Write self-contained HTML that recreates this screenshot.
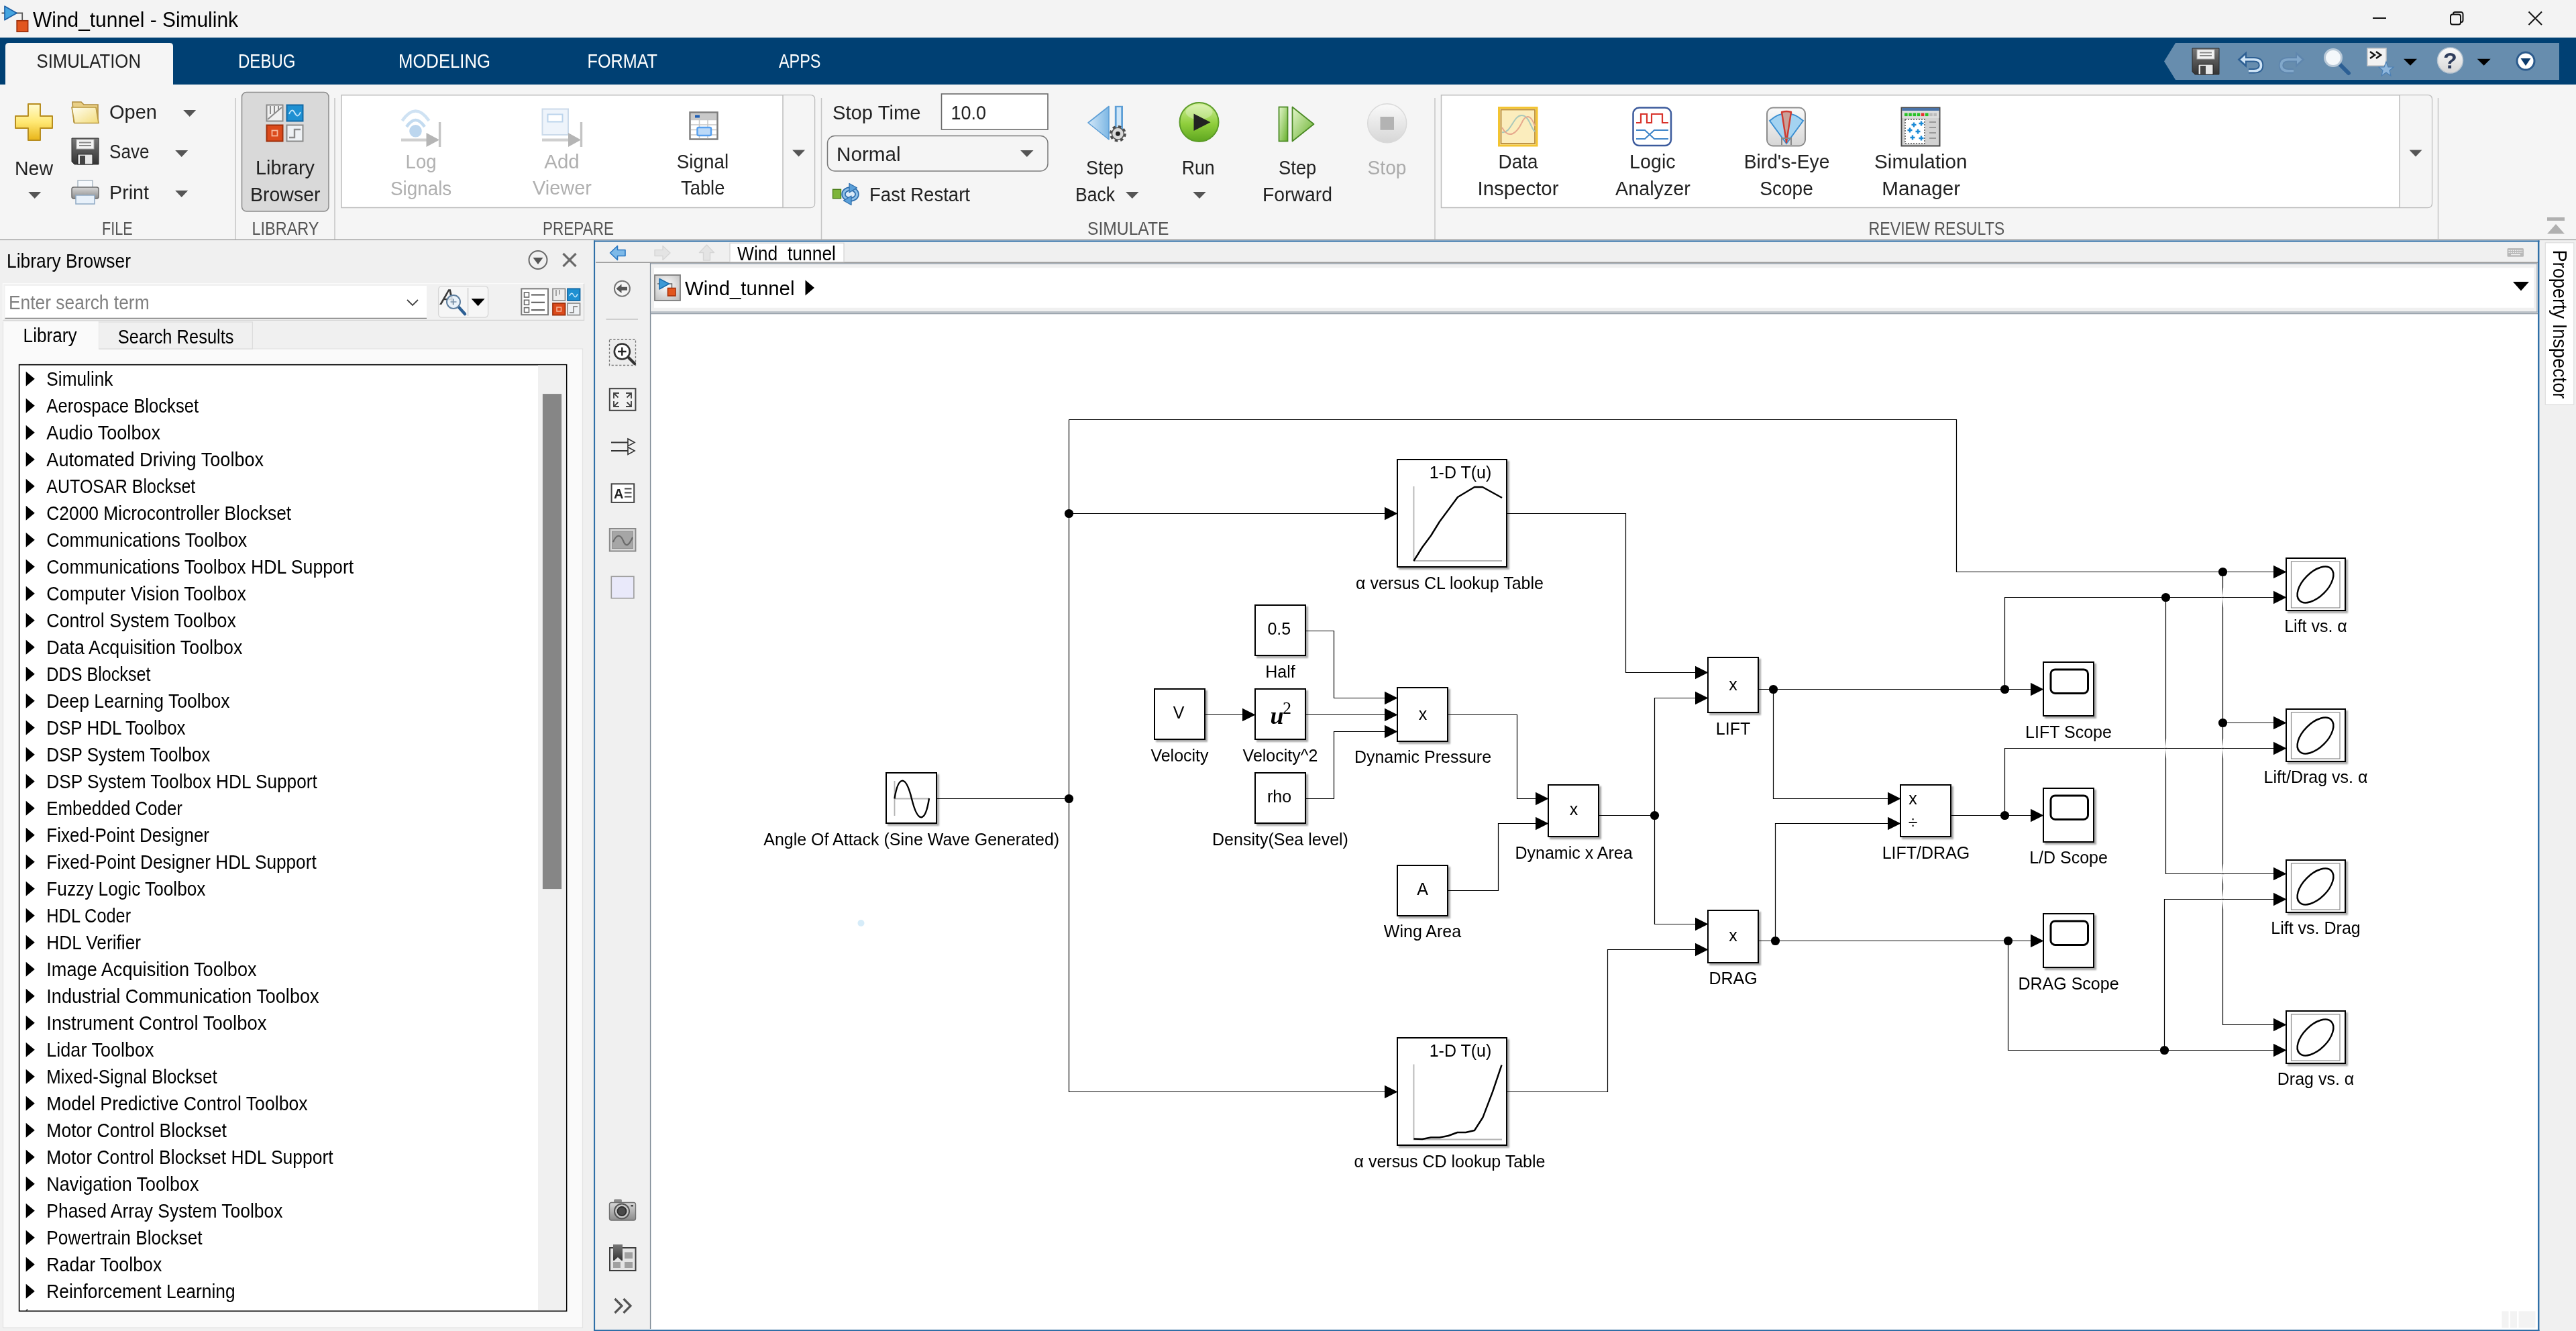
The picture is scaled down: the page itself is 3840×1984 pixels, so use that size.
<!DOCTYPE html>
<html lang="en"><head><meta charset="utf-8"><title>Wind_tunnel - Simulink</title>
<style>
html,body{margin:0;padding:0;background:#f0f0f0}
body{width:3840px;height:1984px}
svg{display:block;font-family:"Liberation Sans",sans-serif;will-change:transform}
text{white-space:pre}
</style></head><body>
<svg width="3840" height="1984" viewBox="0 0 3840 1984">
<rect x="0" y="0" width="3840" height="56" fill="#f3f3f3"/>
<rect x="0" y="56" width="3840" height="70" fill="#004073"/>
<rect x="0" y="126" width="3840" height="231" fill="#f5f5f5"/>
<defs>
<linearGradient id="gY" x1="0" y1="0" x2="0" y2="1"><stop offset="0" stop-color="#fffbd0"/><stop offset="0.5" stop-color="#ffe873"/><stop offset="1" stop-color="#e8b418"/></linearGradient>
<linearGradient id="gF" x1="0" y1="0" x2="1" y2="1"><stop offset="0" stop-color="#fffef2"/><stop offset="1" stop-color="#f3dc7a"/></linearGradient>
<linearGradient id="gG" x1="0" y1="0" x2="0" y2="1"><stop offset="0" stop-color="#d2f09a"/><stop offset="0.55" stop-color="#8fce3c"/><stop offset="1" stop-color="#5ea61f"/></linearGradient>
<linearGradient id="gG2" x1="0" y1="0" x2="1" y2="1"><stop offset="0" stop-color="#e4f6cc"/><stop offset="1" stop-color="#67b02c"/></linearGradient>
<linearGradient id="gB" x1="0" y1="0" x2="1" y2="0"><stop offset="0" stop-color="#d3e8f8"/><stop offset="1" stop-color="#7db7e4"/></linearGradient>
<linearGradient id="gS" x1="0" y1="0" x2="0" y2="1"><stop offset="0" stop-color="#fafafa"/><stop offset="1" stop-color="#d6d6d6"/></linearGradient>
<linearGradient id="gD" x1="0" y1="0" x2="0" y2="1"><stop offset="0" stop-color="#777"/><stop offset="1" stop-color="#333"/></linearGradient>
<linearGradient id="gP" x1="0" y1="0" x2="0" y2="1"><stop offset="0" stop-color="#d8d8d8"/><stop offset="1" stop-color="#8a8a8a"/></linearGradient>
</defs>
<path d="M2.5,19.5 H8 M24,19.5 H33.2 V31" fill="none" stroke="#5a5a5a" stroke-width="1.8"/>
<polygon points="7,9.2 7,29.8 25,19.5" fill="#45a5e0" stroke="#1c5fa5" stroke-width="1.7" stroke-linejoin="round"/>
<rect x="25.2" y="30.8" width="16.4" height="16.4" fill="#e2561e" stroke="#9c300c" stroke-width="1.7"/>
<text x="49" y="40" font-size="30.8" textLength="306" lengthAdjust="spacingAndGlyphs" fill="#000">Wind_tunnel - Simulink</text>
<line x1="3537" y1="27" x2="3557" y2="27" stroke="#111" stroke-width="2"/>
<rect x="3653" y="21.5" width="15" height="15" fill="none" stroke="#111" stroke-width="2" rx="3"/>
<path d="M3657,21 V20.5 Q3657,18 3660,18 H3668 Q3671.5,18 3671.5,21.5 V30 Q3671.5,33 3669,33" fill="none" stroke="#111" stroke-width="2"/>
<path d="M3769.5,17.5 L3789,37 M3789,17.5 L3769.5,37" fill="none" stroke="#111" stroke-width="2"/>
<path d="M8,126 V69 Q8,64 13,64 H253 Q258,64 258,69 V126 Z" fill="#f5f5f5"/>
<text x="54.5" y="100.5" font-size="28.6" textLength="155.5" lengthAdjust="spacingAndGlyphs" fill="#222">SIMULATION</text>
<text x="355" y="100.5" font-size="28.6" textLength="85.5" lengthAdjust="spacingAndGlyphs" fill="#fff">DEBUG</text>
<text x="594" y="100.5" font-size="28.6" textLength="137" lengthAdjust="spacingAndGlyphs" fill="#fff">MODELING</text>
<text x="875.5" y="100.5" font-size="28.6" textLength="104.5" lengthAdjust="spacingAndGlyphs" fill="#fff">FORMAT</text>
<text x="1161" y="100.5" font-size="28.6" textLength="62.5" lengthAdjust="spacingAndGlyphs" fill="#fff">APPS</text>
<polygon points="3226,91.5 3243,64 3815,64 3815,119 3243,119" fill="#678dae"/>
<path d="M3268,72 H3308 V111 H3272 L3268,107 Z" fill="url(#gD)" stroke="#2d2d2d" stroke-width="1"/>
<rect x="3275" y="74" width="26" height="14" fill="#f3f3f3" stroke="#aaa" stroke-width="1"/>
<line x1="3279" y1="78.5" x2="3297" y2="78.5" stroke="#888" stroke-width="2"/>
<line x1="3279" y1="83" x2="3297" y2="83" stroke="#888" stroke-width="2"/>
<rect x="3277" y="96" width="22" height="15" fill="#e8e8e8" stroke="#222" stroke-width="1"/>
<rect x="3280" y="98" width="8" height="13" fill="#444"/>
<path d="M3346,88.7 H3360 Q3370.5,88.7 3370.5,97.2 Q3370.5,105.7 3360,105.7 H3352" fill="none" stroke="#2d5f93" stroke-width="7.5"/>
<polygon points="3335.5,88.7 3349,76.5 3349,101" fill="#2d5f93"/>
<path d="M3346,88.7 H3360 Q3370.5,88.7 3370.5,97.2 Q3370.5,105.7 3360,105.7 H3352" fill="none" stroke="#cfe4f6" stroke-width="3.6"/>
<polygon points="3339.5,88.7 3347,82 3347,95.4" fill="#cfe4f6"/>
<path d="M3425,88.7 H3411 Q3400.5,88.7 3400.5,97.2 Q3400.5,105.7 3411,105.7 H3419" fill="none" stroke="#5f86ad" stroke-width="7.5"/>
<polygon points="3435.5,88.7 3422,76.5 3422,101" fill="#5f86ad"/>
<path d="M3425,88.7 H3411 Q3400.5,88.7 3400.5,97.2 Q3400.5,105.7 3411,105.7 H3419" fill="none" stroke="#82a8cb" stroke-width="3.6"/>
<polygon points="3431.5,88.7 3424,82 3424,95.4" fill="#82a8cb"/>
<line x1="3488" y1="96" x2="3501" y2="109" stroke="#2c5f94" stroke-width="6" stroke-linecap="round"/>
<circle cx="3478" cy="86" r="12.5" fill="#f4f8fb" stroke="#b9c9d8" stroke-width="3"/>
<rect x="3529" y="72" width="28" height="26" fill="#f2f2f2" stroke="#c8c8c8" stroke-width="1.5"/>
<path d="M3533,77 L3540,82 L3533,87 M3542,77 L3549,82 L3542,87" fill="none" stroke="#111" stroke-width="2.6"/>
<polygon points="3557,92 3560,100 3568,100 3562,105 3564,113 3557,108 3550,113 3552,105 3546,100 3554,100" fill="#8fb7dd" stroke="#4b7fb3" stroke-width="1.2"/>
<polygon points="3583.0,87.7 3603.0,87.7 3593,97.7" fill="#000"/>
<circle cx="3652.5" cy="90" r="19" fill="url(#gS)" stroke="#b5c3d0" stroke-width="1.5"/>
<text x="3652.5" y="102" font-size="34" text-anchor="middle" fill="#2f3d5c" font-weight="bold">?</text>
<polygon points="3692.7,87.7 3712.7,87.7 3702.7,97.7" fill="#000"/>
<circle cx="3765" cy="91" r="13" fill="#fff" stroke="#2b5a8c" stroke-width="3"/>
<polygon points="3757.5,87.0 3772.5,87.0 3765,98.0" fill="#0b3a6b"/>
<line x1="0" y1="357.5" x2="3840" y2="357.5" stroke="#9a9a9a" stroke-width="1.5"/>
<path d="M42,155 H60 V173 H78 V191 H60 V209 H42 V191 H23 V173 H42 Z" fill="url(#gY)" stroke="#b78d1f" stroke-width="2" stroke-linejoin="round"/>
<text x="22" y="260.5" font-size="30" textLength="57" lengthAdjust="spacingAndGlyphs" fill="#222">New</text>
<polygon points="42.2,286.0 61.2,286.0 51.7,296.0" fill="#555"/>
<path d="M108,152 H121 L125,156 H146 V182 H110 Z" fill="#e9cf86" stroke="#b08d3c" stroke-width="1.6"/>
<path d="M107,160 H143 L147,183.5 H111 Z" fill="url(#gF)" stroke="#b9983f" stroke-width="1.6"/>
<text x="163" y="177" font-size="30" textLength="71" lengthAdjust="spacingAndGlyphs" fill="#222">Open</text>
<polygon points="273.2,164.0 292.2,164.0 282.7,174.0" fill="#555"/>
<path d="M107,206 H147 V245 H111 L107,241 Z" fill="url(#gD)" stroke="#2d2d2d" stroke-width="1"/>
<rect x="114" y="208" width="26" height="14" fill="#f3f3f3" stroke="#aaa" stroke-width="1"/>
<line x1="118" y1="212.5" x2="136" y2="212.5" stroke="#888" stroke-width="2"/>
<line x1="118" y1="217" x2="136" y2="217" stroke="#888" stroke-width="2"/>
<rect x="116" y="230" width="22" height="15" fill="#e8e8e8" stroke="#222" stroke-width="1"/>
<rect x="119" y="232" width="8" height="13" fill="#444"/>
<text x="163" y="236" font-size="30" textLength="59.5" lengthAdjust="spacingAndGlyphs" fill="#222">Save</text>
<polygon points="261.2,224.0 280.2,224.0 270.7,234.0" fill="#555"/>
<rect x="116" y="269" width="22" height="12" fill="#f6f9fc" stroke="#a9b6c2" stroke-width="1.5"/>
<rect x="107" y="279" width="40" height="17" fill="url(#gP)" stroke="#6d6d6d" stroke-width="1.5" rx="3"/>
<rect x="113" y="291" width="28" height="13" fill="#e8f1fa" stroke="#8fa9c4" stroke-width="1.5"/>
<text x="163" y="297" font-size="30" textLength="59" lengthAdjust="spacingAndGlyphs" fill="#222">Print</text>
<polygon points="261.2,284.0 280.2,284.0 270.7,294.0" fill="#555"/>
<text x="152" y="349.5" font-size="27.6" textLength="45.7" lengthAdjust="spacingAndGlyphs" fill="#555">FILE</text>
<line x1="351" y1="146" x2="351" y2="357" stroke="#c4c4c4" stroke-width="1.5"/>
<rect x="360.5" y="137.5" width="129.5" height="177.5" fill="#d9d9d9" stroke="#8c8c8c" stroke-width="1.5" rx="7"/>
<rect x="397.5" y="156.5" width="24" height="24" fill="#f0f0f0" stroke="#8a8a8a" stroke-width="2"/>
<path d="M403,158 V170 M409,158 V168 M415,158 V165 M399,178 L420,160" fill="none" stroke="#8a8a8a" stroke-width="2"/>
<rect x="427.5" y="156.5" width="24" height="24" fill="#1e90d2" stroke="#136aa6" stroke-width="2"/>
<path d="M431,170 Q435,160 439.5,168.5 T448,167" fill="none" stroke="#bfe4fa" stroke-width="2"/>
<rect x="397.5" y="186.5" width="24" height="24" fill="#db4a1b" stroke="#9e300c" stroke-width="2"/>
<rect x="405.5" y="194.5" width="8" height="8" fill="none" stroke="#f7b79a" stroke-width="1.8"/>
<rect x="427.5" y="186.5" width="24" height="24" fill="#eef1f4" stroke="#8a8a8a" stroke-width="2"/>
<path d="M431,205 H439 V193 H448" fill="none" stroke="#8a8a8a" stroke-width="2.4"/>
<text x="381" y="260" font-size="30" textLength="88" lengthAdjust="spacingAndGlyphs" fill="#222">Library</text>
<text x="373" y="300" font-size="30" textLength="104.5" lengthAdjust="spacingAndGlyphs" fill="#222">Browser</text>
<text x="375.5" y="349.5" font-size="27.6" textLength="100" lengthAdjust="spacingAndGlyphs" fill="#555">LIBRARY</text>
<line x1="499" y1="146" x2="499" y2="357" stroke="#c4c4c4" stroke-width="1.5"/>
<path d="M509,141.75 H1208 Q1214.5,141.75 1214.5,148 V303 Q1214.5,309.5 1208,309.5 H509 Z" fill="#fff" stroke="#bdbdbd" stroke-width="1.5"/>
<path d="M1167,142.5 H1208 Q1213.7,142.5 1213.7,148 V303 Q1213.7,308.7 1208,308.7 H1167 Z" fill="#f5f5f5"/>
<line x1="1167" y1="142" x2="1167" y2="309" stroke="#bdbdbd" stroke-width="1.5"/>
<polygon points="1181.1,223.6 1200.1,223.6 1190.6,233.6" fill="#555"/>
<path d="M599.5,180 Q619.5,151 639.5,180" fill="none" stroke="#cfe2f3" stroke-width="4.5"/>
<path d="M606,189 Q619.5,169 633,189" fill="none" stroke="#c3dbf0" stroke-width="4.5"/>
<circle cx="619.5" cy="195.3" r="9.3" fill="#bcd6ee"/>
<line x1="598" y1="208.6" x2="640" y2="208.6" stroke="#cfcfcf" stroke-width="4.2"/>
<polygon points="635.5,198 635.5,219 655,208.6" fill="#b5b5b5"/>
<line x1="655.6" y1="182" x2="655.6" y2="219" stroke="#c4c4c4" stroke-width="3.4"/>
<text x="604.6" y="251" font-size="30" textLength="46" lengthAdjust="spacingAndGlyphs" fill="#b0b0b0">Log</text>
<text x="581.9" y="291" font-size="30" textLength="91.4" lengthAdjust="spacingAndGlyphs" fill="#b0b0b0">Signals</text>
<rect x="808.5" y="162.5" width="38.5" height="38.5" fill="#eef4fb" stroke="#cbdaea" stroke-width="2"/>
<rect x="816.5" y="170.5" width="22" height="11" fill="#fff" stroke="#bcd4ec" stroke-width="2"/>
<line x1="808" y1="208.6" x2="850" y2="208.6" stroke="#cfcfcf" stroke-width="4.2"/>
<polygon points="847,198 847,219 866,208.6" fill="#b5b5b5"/>
<line x1="866.5" y1="182" x2="866.5" y2="219" stroke="#c4c4c4" stroke-width="3.4"/>
<text x="811.25" y="250.5" font-size="30" textLength="52.5" lengthAdjust="spacingAndGlyphs" fill="#b0b0b0">Add</text>
<text x="794.0" y="290" font-size="30" textLength="88" lengthAdjust="spacingAndGlyphs" fill="#b0b0b0">Viewer</text>
<rect x="1028.5" y="167.5" width="41" height="40" fill="#fff" stroke="#7d7d7d" stroke-width="2.5"/>
<rect x="1030" y="169" width="38" height="9" fill="#c9c9c9"/>
<rect x="1036" y="171.5" width="7" height="4" fill="#1f5fb5"/>
<path d="M1030,178.5 H1068 M1030,186 H1068 M1030,193.5 H1068 M1030,201 H1068 M1042.5,178 V206 M1055,178 V206" fill="none" stroke="#c6c6c6" stroke-width="1.5"/>
<rect x="1039.5" y="190" width="20.5" height="12" fill="#bcd9f7" stroke="#58a0ee" stroke-width="2.5" rx="2"/>
<text x="1008.75" y="250.5" font-size="30" textLength="77.5" lengthAdjust="spacingAndGlyphs" fill="#222">Signal</text>
<text x="1014.95" y="290" font-size="30" textLength="65.5" lengthAdjust="spacingAndGlyphs" fill="#222">Table</text>
<text x="809" y="349.5" font-size="27.6" textLength="106" lengthAdjust="spacingAndGlyphs" fill="#555">PREPARE</text>
<line x1="1224.5" y1="146" x2="1224.5" y2="357" stroke="#c4c4c4" stroke-width="1.5"/>
<text x="1241" y="177.5" font-size="30" textLength="131.5" lengthAdjust="spacingAndGlyphs" fill="#222">Stop Time</text>
<rect x="1403.5" y="140" width="158.5" height="53" fill="#fff" stroke="#6b6b6b" stroke-width="1.6"/>
<text x="1417.5" y="177.5" font-size="30" textLength="52.5" lengthAdjust="spacingAndGlyphs" fill="#222">10.0</text>
<rect x="1233.5" y="202.5" width="328.5" height="52.5" fill="#f5f5f5" stroke="#7a7a7a" stroke-width="1.5" rx="11"/>
<text x="1247" y="240" font-size="30" textLength="95.5" lengthAdjust="spacingAndGlyphs" fill="#222">Normal</text>
<polygon points="1521.05,224.0 1540.55,224.0 1530.8,234.0" fill="#555"/>
<rect x="1241.5" y="282.3" width="12" height="13.5" fill="#7db43a" stroke="#4d7f1b" stroke-width="1.4"/>
<ellipse cx="1267.5" cy="289.5" rx="10" ry="8" fill="#dcebf8" stroke="#2f6fad" stroke-width="6.5"/>
<ellipse cx="1267.5" cy="289.5" rx="10" ry="8" fill="none" stroke="#8fc0e8" stroke-width="3"/>
<polygon points="1266,273.5 1266,287 1277.5,280" fill="#5a9fd8" stroke="#2f6fad" stroke-width="1.3" stroke-linejoin="round"/>
<polygon points="1269,292 1269,305.5 1257.5,299" fill="#5a9fd8" stroke="#2f6fad" stroke-width="1.3" stroke-linejoin="round"/>
<text x="1296" y="300" font-size="30" textLength="150" lengthAdjust="spacingAndGlyphs" fill="#222">Fast Restart</text>
<polygon points="1622,183 1653,158.5 1653,208" fill="url(#gB)" stroke="#5e9fd6" stroke-width="1.6" stroke-linejoin="round"/>
<rect x="1661.8" y="157.8" width="12.2" height="46" fill="#5e9fd6"/>
<rect x="1664.6" y="160" width="6.6" height="44" fill="#cfe6f8"/>
<circle cx="1666.4" cy="199.3" r="10.3" fill="none" stroke="#4a4a4a" stroke-width="4.2" stroke-dasharray="4.3 3.8"/>
<circle cx="1666.4" cy="199.3" r="9" fill="#d9d9d9" stroke="#555" stroke-width="1.6"/>
<circle cx="1666.4" cy="199.3" r="3.4" fill="#222"/>
<text x="1619.12" y="260" font-size="30" textLength="55.75" lengthAdjust="spacingAndGlyphs" fill="#222">Step</text>
<text x="1603" y="300" font-size="30" textLength="59" lengthAdjust="spacingAndGlyphs" fill="#222">Back</text>
<polygon points="1678.05,286.0 1697.55,286.0 1687.8,296.0" fill="#555"/>
<circle cx="1787.5" cy="182" r="29" fill="url(#gG)" stroke="#5c9c28" stroke-width="2"/>
<ellipse cx="1787.5" cy="167" rx="20" ry="11" fill="#fff" opacity="0.28"/>
<polygon points="1779.5,169.5 1779.5,195 1804.5,182.2" fill="#222"/>
<text x="1761.7" y="260" font-size="30" textLength="49" lengthAdjust="spacingAndGlyphs" fill="#222">Run</text>
<polygon points="1778.25,286.0 1797.75,286.0 1788,296.0" fill="#555"/>
<rect x="1906.5" y="159.5" width="13" height="51" fill="url(#gG2)" stroke="#4b8a25" stroke-width="1.8"/>
<polygon points="1926.5,159.5 1926.5,210.5 1958.5,185" fill="url(#gG2)" stroke="#4b8a25" stroke-width="1.8" stroke-linejoin="round"/>
<text x="1906.08" y="260" font-size="30" textLength="56.25" lengthAdjust="spacingAndGlyphs" fill="#222">Step</text>
<text x="1882" y="300" font-size="30" textLength="104" lengthAdjust="spacingAndGlyphs" fill="#222">Forward</text>
<circle cx="2067.7" cy="183.7" r="29" fill="url(#gS)" stroke="#d9d9d9" stroke-width="1.5"/>
<rect x="2057.5" y="174" width="20.5" height="19.8" fill="#b3b3b3"/>
<text x="2038.5" y="260" font-size="30" textLength="58" lengthAdjust="spacingAndGlyphs" fill="#ababab">Stop</text>
<text x="1621" y="349.5" font-size="27.6" textLength="121.5" lengthAdjust="spacingAndGlyphs" fill="#555">SIMULATE</text>
<line x1="2139" y1="146" x2="2139" y2="357" stroke="#c4c4c4" stroke-width="1.5"/>
<path d="M2148.5,141.75 H3619 Q3625.4,141.75 3625.4,148 V303 Q3625.4,309.5 3619,309.5 H2148.5 Z" fill="#fff" stroke="#bdbdbd" stroke-width="1.5"/>
<path d="M3577,142.5 H3619 Q3624.6,142.5 3624.6,148 V303 Q3624.6,308.7 3619,308.7 H3577 Z" fill="#f5f5f5"/>
<line x1="3577" y1="142" x2="3577" y2="309" stroke="#bdbdbd" stroke-width="1.5"/>
<polygon points="3591.5,223.6 3610.5,223.6 3601,233.6" fill="#555"/>
<rect x="2234.5" y="160.5" width="56.5" height="56.5" fill="#fbedbd" stroke="#f3c431" stroke-width="3"/>
<rect x="2237.5" y="163.5" width="50.5" height="50.5" fill="none" stroke="#b88a3a" stroke-width="1.8"/>
<path d="M2239,197 C2252,200 2256,172 2268,172 C2280,172 2282,192 2288,196" fill="none" stroke="#a9c8bb" stroke-width="2"/>
<path d="M2239,190 C2250,210 2262,196 2268,184 C2274,170 2282,170 2288,188" fill="none" stroke="#e6a98d" stroke-width="2"/>
<text x="2233.62" y="251" font-size="30" textLength="58.75" lengthAdjust="spacingAndGlyphs" fill="#222">Data</text>
<text x="2202.5" y="291" font-size="30" textLength="121" lengthAdjust="spacingAndGlyphs" fill="#222">Inspector</text>
<rect x="2434.5" y="160.5" width="56.5" height="56.5" fill="#fff" stroke="#3b5a9c" stroke-width="2.5" rx="9"/>
<path d="M2439,183 H2446 V170 H2455 V183 H2462 V170 H2478 V183 H2487" fill="none" stroke="#d8322a" stroke-width="2.2"/>
<path d="M2439,194 H2452 L2466,207 H2487 M2439,207 H2452 L2466,194 H2487" fill="none" stroke="#3f86c9" stroke-width="2.2"/>
<text x="2429.0" y="251" font-size="30" textLength="68.6" lengthAdjust="spacingAndGlyphs" fill="#222">Logic</text>
<text x="2408.1" y="291" font-size="30" textLength="111.8" lengthAdjust="spacingAndGlyphs" fill="#222">Analyzer</text>
<rect x="2634" y="160.5" width="57" height="57" fill="url(#gS)" stroke="#8c8c8c" stroke-width="2" rx="9"/>
<path d="M2663,214 L2638,180 Q2663,158 2688,180 Z" fill="#a4d3f1" stroke="#3b8fd2" stroke-width="2"/>
<path d="M2663,212 L2656,167 Q2663,165 2670,167 Z" fill="#c9a199" stroke="#cf3a30" stroke-width="2.4" stroke-linejoin="round"/>
<path d="M2656,216 V206 H2670 V216" fill="none" stroke="#888" stroke-width="2"/>
<text x="2599.65" y="251" font-size="30" textLength="127.7" lengthAdjust="spacingAndGlyphs" fill="#222">Bird's-Eye</text>
<text x="2623.25" y="291" font-size="30" textLength="79.5" lengthAdjust="spacingAndGlyphs" fill="#222">Scope</text>
<rect x="2834.5" y="160.5" width="57" height="57" fill="#d2d2d2" stroke="#4a4a4a" stroke-width="2"/>
<rect x="2835.5" y="161" width="55" height="4" fill="#4a73a8"/>
<rect x="2835.5" y="165" width="55" height="11" fill="#dedede"/>
<rect x="2839.0" y="168.5" width="4.6" height="4.6" fill="#28c228"/>
<rect x="2845.2" y="168.5" width="4.6" height="4.6" fill="#28c228"/>
<rect x="2851.4" y="168.5" width="4.6" height="4.6" fill="#28c228"/>
<rect x="2857.6" y="168.5" width="4.6" height="4.6" fill="#28c228"/>
<rect x="2863.8" y="168.5" width="4.6" height="4.6" fill="#e83030"/>
<rect x="2870.0" y="168.5" width="4.6" height="4.6" fill="#28c228"/>
<rect x="2876.2" y="168.5" width="4.6" height="4.6" fill="#bbb"/>
<rect x="2882.4" y="168.5" width="4.6" height="4.6" fill="#bbb"/>
<rect x="2840" y="178" width="29" height="36" fill="#fff" stroke="#555" stroke-width="1.5" stroke-dasharray="2 2"/>
<path d="M2849.5,186 H2856.5 M2853,182.5 V189.5" fill="none" stroke="#1b8ad6" stroke-width="2.4"/>
<path d="M2860.5,184 H2867.5 M2864,180.5 V187.5" fill="none" stroke="#1b8ad6" stroke-width="2.4"/>
<path d="M2843.5,194 H2850.5 M2847,190.5 V197.5" fill="none" stroke="#1b8ad6" stroke-width="2.4"/>
<path d="M2855.5,196 H2862.5 M2859,192.5 V199.5" fill="none" stroke="#1b8ad6" stroke-width="2.4"/>
<path d="M2847.5,205 H2854.5 M2851,201.5 V208.5" fill="none" stroke="#1b8ad6" stroke-width="2.4"/>
<path d="M2860.5,206 H2867.5 M2864,202.5 V209.5" fill="none" stroke="#1b8ad6" stroke-width="2.4"/>
<path d="M2876,182 H2886 M2876,190 H2886 M2876,198 H2886 M2876,206 H2886" fill="none" stroke="#999" stroke-width="2"/>
<text x="2794.0" y="251" font-size="30" textLength="138.6" lengthAdjust="spacingAndGlyphs" fill="#222">Simulation</text>
<text x="2805.3" y="291" font-size="30" textLength="116.8" lengthAdjust="spacingAndGlyphs" fill="#222">Manager</text>
<text x="2785.6" y="349.5" font-size="27.6" textLength="202.7" lengthAdjust="spacingAndGlyphs" fill="#555">REVIEW RESULTS</text>
<line x1="3634.5" y1="146" x2="3634.5" y2="356" stroke="#c4c4c4" stroke-width="1.5"/>
<rect x="3797" y="324" width="26" height="5" fill="#b0b0b0"/>
<polygon points="3797,348.5 3823,348.5 3810,334" fill="#b0b0b0"/>
<rect x="0" y="358.3" width="885" height="1626" fill="#f0f0f0"/>
<text x="10" y="399" font-size="28.8" textLength="185" lengthAdjust="spacingAndGlyphs" fill="#000">Library Browser</text>
<circle cx="802" cy="387.5" r="13.5" fill="none" stroke="#6a6a6a" stroke-width="2"/>
<polygon points="794.5,384.0 809.5,384.0 802,394.0" fill="#555"/>
<path d="M839.5,378 L858.5,397 M858.5,378 L839.5,397" fill="none" stroke="#6a6a6a" stroke-width="3.2"/>
<rect x="4.5" y="422.5" width="866" height="54.8" fill="#f1f1f1"/>
<path d="M4.5,477.3 V422.7 H870.5" fill="none" stroke="#fbfbfb" stroke-width="1.3"/>
<path d="M4.5,477.3 H870.5 V422.7" fill="none" stroke="#d4d4d4" stroke-width="1.3"/>
<rect x="7.5" y="426" width="628.5" height="48" fill="#fff"/>
<line x1="7.5" y1="474.3" x2="636" y2="474.3" stroke="#7a7a7a" stroke-width="1.3"/>
<text x="13" y="461" font-size="28.8" textLength="209.6" lengthAdjust="spacingAndGlyphs" fill="#808080">Enter search term</text>
<path d="M607,447 L615,455 L623,447" fill="none" stroke="#444" stroke-width="1.8"/>
<rect x="653.6" y="426.6" width="74" height="46.6" fill="#f6f6f6" stroke="#d6d6d6" stroke-width="1.3" rx="5"/>
<line x1="697.6" y1="429" x2="697.6" y2="471" stroke="#c9c9c9" stroke-width="1.3"/>
<text x="655" y="454.5" font-size="33" fill="#3a3a3a" transform="skewX(-10)" transform-origin="655 454.5">A</text>
<line x1="684" y1="458" x2="693" y2="468" stroke="#2c5f94" stroke-width="4.5" stroke-linecap="round"/>
<circle cx="676" cy="450" r="10" fill="#e8f1f9" fill-opacity="0.85" stroke="#5f7f9f" stroke-width="2"/>
<path d="M671.5,450 H680.5 M676,445.5 V454.5" fill="none" stroke="#7a93ab" stroke-width="1.6"/>
<polygon points="702.6,445.2 722.6,445.2 712.6,456.2" fill="#000"/>
<rect x="777.3" y="430.4" width="39.7" height="38.8" fill="#fff" stroke="#7a7a7a" stroke-width="2"/>
<rect x="781.5" y="436.0" width="7" height="7" fill="#fff" stroke="#666" stroke-width="1.6"/>
<line x1="792" y1="439.5" x2="812" y2="439.5" stroke="#666" stroke-width="2.2"/>
<rect x="781.5" y="447.3" width="7" height="7" fill="#fff" stroke="#666" stroke-width="1.6"/>
<line x1="792" y1="450.8" x2="812" y2="450.8" stroke="#666" stroke-width="2.2"/>
<rect x="781.5" y="458.6" width="7" height="7" fill="#fff" stroke="#666" stroke-width="1.6"/>
<line x1="792" y1="462.1" x2="812" y2="462.1" stroke="#666" stroke-width="2.2"/>
<rect x="824" y="430.4" width="18.5" height="17.6" fill="#ededed" stroke="#909090" stroke-width="1.8"/>
<path d="M829,432 V441 M834,432 V439" fill="none" stroke="#909090" stroke-width="1.6"/>
<rect x="846" y="430.4" width="18.5" height="17.6" fill="#1e90d2" stroke="#136aa6" stroke-width="1.8"/>
<path d="M849,441 Q852,434 855,440 T861,438" fill="none" stroke="#bfe4fa" stroke-width="1.6"/>
<rect x="824" y="452" width="18.5" height="17.6" fill="#db4a1b" stroke="#9e300c" stroke-width="1.8"/>
<rect x="830" y="458" width="6.5" height="6" fill="none" stroke="#f7b79a" stroke-width="1.5"/>
<rect x="846" y="452" width="18.5" height="17.6" fill="#eef1f4" stroke="#909090" stroke-width="1.8"/>
<path d="M849,466 H855 V457 H861" fill="none" stroke="#909090" stroke-width="1.8"/>
<rect x="4.5" y="520" width="864" height="1459" fill="#fafafa" stroke="#e3e3e3" stroke-width="1.2"/>
<rect x="147" y="480" width="229.4" height="40" fill="#f0f0f0" stroke="#dcdcdc" stroke-width="1.2"/>
<rect x="4.5" y="479.6" width="142.5" height="41.5" fill="#fafafa"/>
<line x1="4.5" y1="479.6" x2="4.5" y2="521" stroke="#e3e3e3" stroke-width="1.2"/>
<text x="34.6" y="509.6" font-size="28.8" textLength="80" lengthAdjust="spacingAndGlyphs" fill="#000">Library</text>
<text x="175.8" y="512" font-size="28.8" textLength="172.8" lengthAdjust="spacingAndGlyphs" fill="#000">Search Results</text>
<rect x="28.6" y="543.7" width="816" height="1410.6" fill="#fff" stroke="#000" stroke-width="1.6"/>
<rect x="802" y="544.5" width="41.8" height="1408.5" fill="#f0f0f0"/>
<rect x="808.9" y="587.1" width="28.2" height="738" fill="#868686"/>
<polygon points="38.7,553.7 38.7,575.7 51.8,564.7" fill="#000"/>
<text x="69.3" y="574.7" font-size="28.8" textLength="99.2" lengthAdjust="spacingAndGlyphs" fill="#000">Simulink</text>
<polygon points="38.7,593.7 38.7,615.7 51.8,604.7" fill="#000"/>
<text x="69.3" y="614.7" font-size="28.8" textLength="226.9" lengthAdjust="spacingAndGlyphs" fill="#000">Aerospace Blockset</text>
<polygon points="38.7,633.7 38.7,655.7 51.8,644.7" fill="#000"/>
<text x="69.3" y="654.7" font-size="28.8" textLength="169.8" lengthAdjust="spacingAndGlyphs" fill="#000">Audio Toolbox</text>
<polygon points="38.7,673.7 38.7,695.7 51.8,684.7" fill="#000"/>
<text x="69.3" y="694.7" font-size="28.8" textLength="323.9" lengthAdjust="spacingAndGlyphs" fill="#000">Automated Driving Toolbox</text>
<polygon points="38.7,713.7 38.7,735.7 51.8,724.7" fill="#000"/>
<text x="69.3" y="734.7" font-size="28.8" textLength="222.0" lengthAdjust="spacingAndGlyphs" fill="#000">AUTOSAR Blockset</text>
<polygon points="38.7,753.7 38.7,775.7 51.8,764.7" fill="#000"/>
<text x="69.3" y="774.7" font-size="28.8" textLength="364.9" lengthAdjust="spacingAndGlyphs" fill="#000">C2000 Microcontroller Blockset</text>
<polygon points="38.7,793.7 38.7,815.7 51.8,804.7" fill="#000"/>
<text x="69.3" y="814.7" font-size="28.8" textLength="298.9" lengthAdjust="spacingAndGlyphs" fill="#000">Communications Toolbox</text>
<polygon points="38.7,833.7 38.7,855.7 51.8,844.7" fill="#000"/>
<text x="69.3" y="854.7" font-size="28.8" textLength="457.9" lengthAdjust="spacingAndGlyphs" fill="#000">Communications Toolbox HDL Support</text>
<polygon points="38.7,873.7 38.7,895.7 51.8,884.7" fill="#000"/>
<text x="69.3" y="894.7" font-size="28.8" textLength="297.6" lengthAdjust="spacingAndGlyphs" fill="#000">Computer Vision Toolbox</text>
<polygon points="38.7,913.7 38.7,935.7 51.8,924.7" fill="#000"/>
<text x="69.3" y="934.7" font-size="28.8" textLength="282.6" lengthAdjust="spacingAndGlyphs" fill="#000">Control System Toolbox</text>
<polygon points="38.7,953.7 38.7,975.7 51.8,964.7" fill="#000"/>
<text x="69.3" y="974.7" font-size="28.8" textLength="292.1" lengthAdjust="spacingAndGlyphs" fill="#000">Data Acquisition Toolbox</text>
<polygon points="38.7,993.7 38.7,1015.7 51.8,1004.7" fill="#000"/>
<text x="69.3" y="1014.7" font-size="28.8" textLength="155.2" lengthAdjust="spacingAndGlyphs" fill="#000">DDS Blockset</text>
<polygon points="38.7,1033.7 38.7,1055.7 51.8,1044.7" fill="#000"/>
<text x="69.3" y="1054.7" font-size="28.8" textLength="273.4" lengthAdjust="spacingAndGlyphs" fill="#000">Deep Learning Toolbox</text>
<polygon points="38.7,1073.7 38.7,1095.7 51.8,1084.7" fill="#000"/>
<text x="69.3" y="1094.7" font-size="28.8" textLength="207.3" lengthAdjust="spacingAndGlyphs" fill="#000">DSP HDL Toolbox</text>
<polygon points="38.7,1113.7 38.7,1135.7 51.8,1124.7" fill="#000"/>
<text x="69.3" y="1134.7" font-size="28.8" textLength="244.0" lengthAdjust="spacingAndGlyphs" fill="#000">DSP System Toolbox</text>
<polygon points="38.7,1153.7 38.7,1175.7 51.8,1164.7" fill="#000"/>
<text x="69.3" y="1174.7" font-size="28.8" textLength="403.5" lengthAdjust="spacingAndGlyphs" fill="#000">DSP System Toolbox HDL Support</text>
<polygon points="38.7,1193.7 38.7,1215.7 51.8,1204.7" fill="#000"/>
<text x="69.3" y="1214.7" font-size="28.8" textLength="202.7" lengthAdjust="spacingAndGlyphs" fill="#000">Embedded Coder</text>
<polygon points="38.7,1233.7 38.7,1255.7 51.8,1244.7" fill="#000"/>
<text x="69.3" y="1254.7" font-size="28.8" textLength="242.7" lengthAdjust="spacingAndGlyphs" fill="#000">Fixed-Point Designer</text>
<polygon points="38.7,1273.7 38.7,1295.7 51.8,1284.7" fill="#000"/>
<text x="69.3" y="1294.7" font-size="28.8" textLength="402.4" lengthAdjust="spacingAndGlyphs" fill="#000">Fixed-Point Designer HDL Support</text>
<polygon points="38.7,1313.7 38.7,1335.7 51.8,1324.7" fill="#000"/>
<text x="69.3" y="1334.7" font-size="28.8" textLength="237.2" lengthAdjust="spacingAndGlyphs" fill="#000">Fuzzy Logic Toolbox</text>
<polygon points="38.7,1353.7 38.7,1375.7 51.8,1364.7" fill="#000"/>
<text x="69.3" y="1374.7" font-size="28.8" textLength="125.8" lengthAdjust="spacingAndGlyphs" fill="#000">HDL Coder</text>
<polygon points="38.7,1393.7 38.7,1415.7 51.8,1404.7" fill="#000"/>
<text x="69.3" y="1414.7" font-size="28.8" textLength="140.8" lengthAdjust="spacingAndGlyphs" fill="#000">HDL Verifier</text>
<polygon points="38.7,1433.7 38.7,1455.7 51.8,1444.7" fill="#000"/>
<text x="69.3" y="1454.7" font-size="28.8" textLength="313.3" lengthAdjust="spacingAndGlyphs" fill="#000">Image Acquisition Toolbox</text>
<polygon points="38.7,1473.7 38.7,1495.7 51.8,1484.7" fill="#000"/>
<text x="69.3" y="1494.7" font-size="28.8" textLength="406.3" lengthAdjust="spacingAndGlyphs" fill="#000">Industrial Communication Toolbox</text>
<polygon points="38.7,1513.7 38.7,1535.7 51.8,1524.7" fill="#000"/>
<text x="69.3" y="1534.7" font-size="28.8" textLength="328.3" lengthAdjust="spacingAndGlyphs" fill="#000">Instrument Control Toolbox</text>
<polygon points="38.7,1553.7 38.7,1575.7 51.8,1564.7" fill="#000"/>
<text x="69.3" y="1574.7" font-size="28.8" textLength="160.3" lengthAdjust="spacingAndGlyphs" fill="#000">Lidar Toolbox</text>
<polygon points="38.7,1593.7 38.7,1615.7 51.8,1604.7" fill="#000"/>
<text x="69.3" y="1614.7" font-size="28.8" textLength="254.3" lengthAdjust="spacingAndGlyphs" fill="#000">Mixed-Signal Blockset</text>
<polygon points="38.7,1633.7 38.7,1655.7 51.8,1644.7" fill="#000"/>
<text x="69.3" y="1654.7" font-size="28.8" textLength="389.4" lengthAdjust="spacingAndGlyphs" fill="#000">Model Predictive Control Toolbox</text>
<polygon points="38.7,1673.7 38.7,1695.7 51.8,1684.7" fill="#000"/>
<text x="69.3" y="1694.7" font-size="28.8" textLength="268.5" lengthAdjust="spacingAndGlyphs" fill="#000">Motor Control Blockset</text>
<polygon points="38.7,1713.7 38.7,1735.7 51.8,1724.7" fill="#000"/>
<text x="69.3" y="1734.7" font-size="28.8" textLength="427.4" lengthAdjust="spacingAndGlyphs" fill="#000">Motor Control Blockset HDL Support</text>
<polygon points="38.7,1753.7 38.7,1775.7 51.8,1764.7" fill="#000"/>
<text x="69.3" y="1774.7" font-size="28.8" textLength="227.2" lengthAdjust="spacingAndGlyphs" fill="#000">Navigation Toolbox</text>
<polygon points="38.7,1793.7 38.7,1815.7 51.8,1804.7" fill="#000"/>
<text x="69.3" y="1814.7" font-size="28.8" textLength="352.2" lengthAdjust="spacingAndGlyphs" fill="#000">Phased Array System Toolbox</text>
<polygon points="38.7,1833.7 38.7,1855.7 51.8,1844.7" fill="#000"/>
<text x="69.3" y="1854.7" font-size="28.8" textLength="232.3" lengthAdjust="spacingAndGlyphs" fill="#000">Powertrain Blockset</text>
<polygon points="38.7,1873.7 38.7,1895.7 51.8,1884.7" fill="#000"/>
<text x="69.3" y="1894.7" font-size="28.8" textLength="172.0" lengthAdjust="spacingAndGlyphs" fill="#000">Radar Toolbox</text>
<polygon points="38.7,1913.7 38.7,1935.7 51.8,1924.7" fill="#000"/>
<text x="69.3" y="1934.7" font-size="28.8" textLength="281.3" lengthAdjust="spacingAndGlyphs" fill="#000">Reinforcement Learning</text>
<polygon points="38.7,1953.7 38.7,1953 40.5,1951.5 42,1953" fill="#000"/>
<rect x="3786" y="358.3" width="54" height="1626" fill="#f0f0f0"/>
<rect x="886" y="359" width="2898.5" height="1624" fill="#f0f0f0"/>
<line x1="885" y1="359.5" x2="3785.5" y2="359.5" stroke="#2f6fa7" stroke-width="1.8"/>
<line x1="886.05" y1="358.6" x2="886.05" y2="1984" stroke="#2f6fa7" stroke-width="2.1"/>
<line x1="3784.2" y1="358.6" x2="3784.2" y2="1984" stroke="#2f6fa7" stroke-width="2.5"/>
<line x1="885" y1="1983" x2="3785.5" y2="1983" stroke="#2f6fa7" stroke-width="2"/>
<rect x="970" y="468" width="2813" height="1513.5" fill="#fff"/>
<line x1="888" y1="391.3" x2="3783" y2="391.3" stroke="#9a9a9a" stroke-width="1.6"/>
<rect x="1088" y="362.3" width="170" height="28.2" fill="#fff" stroke="#d2d2d2" stroke-width="1.2"/>
<clipPath id="cpTab"><rect x="1090" y="360" width="168" height="29.3"/></clipPath>
<text x="1099" y="387.5" font-size="28.8" textLength="147" lengthAdjust="spacingAndGlyphs" fill="#000" clip-path="url(#cpTab)">Wind_tunnel</text>
<polygon points="909.5,377 920.5,366.5 920.5,372.5 932,372.5 932,381.5 920.5,381.5 920.5,387.5" fill="#7db9e8" stroke="#2b78c2" stroke-width="1.6" stroke-linejoin="round"/>
<polygon points="999,377 988,366.5 988,372.5 976,372.5 976,381.5 988,381.5 988,387.5" fill="#e4e4e4" stroke="#d6d6d6" stroke-width="1.4" stroke-linejoin="round"/>
<polygon points="1053.5,365 1042.5,376.5 1048.5,376.5 1048.5,388 1058.5,388 1058.5,376.5 1064.5,376.5" fill="#e4e4e4" stroke="#d6d6d6" stroke-width="1.4" stroke-linejoin="round"/>
<rect x="3737.5" y="370" width="24.5" height="12.7" fill="#b9b9b9" rx="1.5"/>
<path d="M3739.5,373.3 H3760 M3739.5,376.3 H3760" fill="none" stroke="#f0f0f0" stroke-width="1.3" stroke-dasharray="2 1.2"/>
<line x1="3743" y1="379.6" x2="3757" y2="379.6" stroke="#f0f0f0" stroke-width="1.3"/>
<line x1="969.6" y1="392" x2="969.6" y2="1981" stroke="#7d8995" stroke-width="1.4"/>
<rect x="970.3" y="392.3" width="2812" height="75.5" fill="#f0f0f0"/>
<rect x="975" y="399.2" width="2802.3" height="59.6" fill="#fff"/>
<line x1="969" y1="392.9" x2="3782.5" y2="392.9" stroke="#8a95a1" stroke-width="1.1"/>
<line x1="3781.9" y1="393" x2="3781.9" y2="465.5" stroke="#a4adb6" stroke-width="1.1"/>
<line x1="969" y1="465.1" x2="3782.5" y2="465.1" stroke="#8a95a1" stroke-width="1.2"/>
<line x1="969" y1="467.6" x2="3783.5" y2="467.6" stroke="#8a95a1" stroke-width="1.2"/>
<defs><radialGradient id="gI" cx="0.45" cy="0.4" r="0.75"><stop offset="0" stop-color="#fdfdfd"/><stop offset="1" stop-color="#bdbdbd"/></radialGradient></defs>
<rect x="976" y="410" width="38" height="38" fill="url(#gI)" stroke="#7d7d7d" stroke-width="1.8"/>
<path d="M980,423 H985 M996,423 H1001.5 V430" fill="none" stroke="#666" stroke-width="1.5"/>
<polygon points="983,415.5 983,431 997.5,423" fill="#3d9ad6" stroke="#1d6fae" stroke-width="1.6" stroke-linejoin="round"/>
<rect x="995.5" y="429.5" width="11.5" height="11.5" fill="#e2561e" stroke="#a8320c" stroke-width="1.6"/>
<text x="1021" y="440" font-size="30" textLength="163.5" lengthAdjust="spacingAndGlyphs" fill="#000">Wind_tunnel</text>
<polygon points="1200.5,417.5 1200.5,440.5 1214,429" fill="#000"/>
<polygon points="3746,420 3770,420 3758,433.5" fill="#000"/>
<circle cx="927.4" cy="430.2" r="11.5" fill="#f4f4f4" stroke="#777" stroke-width="2"/>
<polygon points="918.5,430.2 926.5,423.5 926.5,427.7 935,427.7 935,432.7 926.5,432.7 926.5,437" fill="#555"/>
<line x1="903.5" y1="475.8" x2="951" y2="475.8" stroke="#b5b5b5" stroke-width="1.2"/>
<rect x="908.5" y="506" width="39" height="38.5" fill="#ececec" stroke="#777" stroke-width="1.3" stroke-dasharray="3.2 2.6"/>
<line x1="936.5" y1="532.5" x2="946" y2="542" stroke="#333" stroke-width="4.2" stroke-linecap="round"/>
<circle cx="927.3" cy="524" r="11.5" fill="#fff" stroke="#333" stroke-width="2.6"/>
<path d="M921,524 H933.6 M927.3,517.7 V530.3" fill="none" stroke="#222" stroke-width="2.4"/>
<rect x="908.8" y="579.2" width="38.6" height="32.6" fill="#f2f2f2" stroke="#444" stroke-width="2"/>
<path d="M915,594 V586 H923 M915.5,586.5 L921.5,592.5 M941,594 V586 H933 M940.5,586.5 L934.5,592.5 M915,598 V606 H923 M915.5,605.5 L921.5,599.5 M941,598 V606 H933 M940.5,605.5 L934.5,599.5" fill="none" stroke="#444" stroke-width="1.9"/>
<path d="M911,659.5 H940 M911,672 H940" fill="none" stroke="#333" stroke-width="2.2"/>
<polygon points="936,654 946,659.5 936,665" fill="#f0f0f0" stroke="#333" stroke-width="1.6"/>
<polygon points="936,666.5 946,672 936,677.5" fill="#f0f0f0" stroke="#333" stroke-width="1.6"/>
<rect x="911.6" y="721.3" width="33.6" height="27.6" fill="#fff" stroke="#444" stroke-width="2"/>
<text x="915" y="743" font-size="20" fill="#222" font-weight="bold">A</text>
<path d="M931,728.5 H941.5 M931,734.5 H941.5 M931,740.5 H941.5" fill="none" stroke="#444" stroke-width="1.8"/>
<rect x="908.8" y="788" width="38.6" height="33.5" fill="#d9d9d9" stroke="#8a8a8a" stroke-width="2"/>
<rect x="912.5" y="792" width="31" height="25.5" fill="#a6a6a6" stroke="#909090" stroke-width="1"/>
<path d="M914,808 C919,796 925,796 929,806 S937,814 943,801" fill="none" stroke="#6b6b6b" stroke-width="2.2"/>
<rect x="911.3" y="859.3" width="33.6" height="32.4" fill="#e9e9fa" stroke="#9c9c9c" stroke-width="1.6"/>
<rect x="915" y="1787.5" width="12" height="5" fill="#8c8c8c" rx="2"/>
<rect x="908.5" y="1792.5" width="39" height="26.5" fill="url(#gP)" stroke="#6f6f6f" stroke-width="1.4" rx="3"/>
<circle cx="927" cy="1805.5" r="11" fill="#c9c9c9" stroke="#555" stroke-width="2"/>
<circle cx="927" cy="1805.5" r="6.5" fill="#4a4a4a" stroke="#2e2e2e" stroke-width="2"/>
<rect x="940.5" y="1796" width="3.5" height="2.5" fill="#444"/>
<rect x="909" y="1860" width="38.5" height="34" fill="#e4e4e4" stroke="#3c3c3c" stroke-width="2"/>
<rect x="914" y="1855" width="14" height="24" fill="url(#gD)"/>
<polygon points="914,1880.5 921,1874 928,1880.5" fill="#e4e4e4"/>
<rect x="931" y="1866.5" width="12" height="9.5" fill="#a0a0a0"/>
<rect x="914" y="1881" width="11" height="9" fill="#a0a0a0"/>
<rect x="931" y="1881" width="12" height="9" fill="#a0a0a0"/>
<path d="M916.5,1936 L927,1946.5 L916.5,1957 M929.5,1936 L940,1946.5 L929.5,1957" fill="none" stroke="#555" stroke-width="3.2"/>
<rect x="3729.5" y="1954.4" width="10" height="24.6" fill="#f3f3f3"/>
<rect x="3742" y="1954.4" width="10" height="24.6" fill="#f3f3f3"/>
<rect x="3754.6" y="1954.4" width="25" height="24.6" fill="#f3f3f3"/>
<rect x="3794.3" y="361.8" width="42.5" height="241.2" fill="#fff" stroke="#dedede" stroke-width="1.2"/>
<text x="0" y="0" font-size="28.8" textLength="221.8" lengthAdjust="spacingAndGlyphs" fill="#000" transform="translate(3805.6,372.5) rotate(90)">Property Inspector</text>
<defs><filter id="sh" x="-10%" y="-10%" width="130%" height="130%"><feGaussianBlur stdDeviation="1.2"/></filter></defs>
<g>
<circle cx="1283.5" cy="1376" r="5" fill="#d6ecf9"/>
<path d="M1396.5,1190.5 L1593.5,1190.5" fill="none" stroke="#000" stroke-width="1.2"/>
<path d="M1593.5,625.5 L2916.5,625.5 L2916.5,852.5 L3408.5,852.5" fill="none" stroke="#000" stroke-width="1.2"/>
<polygon points="3408.5,852.5 3389.0,842.7 3389.0,862.3" fill="#000"/>
<path d="M1593.5,765.5 L2083.5,765.5" fill="none" stroke="#000" stroke-width="1.2"/>
<polygon points="2083.5,765.5 2064.0,755.7 2064.0,775.3" fill="#000"/>
<path d="M1593.5,625.5 L1593.5,1627.5 L2083.5,1627.5" fill="none" stroke="#000" stroke-width="1.2"/>
<polygon points="2083.5,1627.5 2064.0,1617.7 2064.0,1637.3" fill="#000"/>
<path d="M1946.5,940.5 L1988.5,940.5 L1988.5,1040.5 L2083.5,1040.5" fill="none" stroke="#000" stroke-width="1.2"/>
<polygon points="2083.5,1040.5 2064.0,1030.7 2064.0,1050.3" fill="#000"/>
<path d="M1796.5,1065.5 L1871.5,1065.5" fill="none" stroke="#000" stroke-width="1.2"/>
<polygon points="1871.5,1065.5 1852.0,1055.7 1852.0,1075.3" fill="#000"/>
<path d="M1946.5,1065.5 L2083.5,1065.5" fill="none" stroke="#000" stroke-width="1.2"/>
<polygon points="2083.5,1065.5 2064.0,1055.7 2064.0,1075.3" fill="#000"/>
<path d="M1946.5,1190.5 L1988.5,1190.5 L1988.5,1090.5 L2083.5,1090.5" fill="none" stroke="#000" stroke-width="1.2"/>
<polygon points="2083.5,1090.5 2064.0,1080.7 2064.0,1100.3" fill="#000"/>
<path d="M2158.5,1065.5 L2261.5,1065.5 L2261.5,1190.5 L2308.5,1190.5" fill="none" stroke="#000" stroke-width="1.2"/>
<polygon points="2308.5,1190.5 2289.0,1180.7 2289.0,1200.3" fill="#000"/>
<path d="M2158.5,1327.5 L2233.5,1327.5 L2233.5,1227.5 L2308.5,1227.5" fill="none" stroke="#000" stroke-width="1.2"/>
<polygon points="2308.5,1227.5 2289.0,1217.7 2289.0,1237.3" fill="#000"/>
<path d="M2383.5,1215.5 L2466.5,1215.5" fill="none" stroke="#000" stroke-width="1.2"/>
<path d="M2466.5,1215.5 L2466.5,1040.5 L2546.5,1040.5" fill="none" stroke="#000" stroke-width="1.2"/>
<polygon points="2546.5,1040.5 2527.0,1030.7 2527.0,1050.3" fill="#000"/>
<path d="M2466.5,1215.5 L2466.5,1377.5 L2546.5,1377.5" fill="none" stroke="#000" stroke-width="1.2"/>
<polygon points="2546.5,1377.5 2527.0,1367.7 2527.0,1387.3" fill="#000"/>
<path d="M2246.5,765.5 L2423.5,765.5 L2423.5,1002.5 L2546.5,1002.5" fill="none" stroke="#000" stroke-width="1.2"/>
<polygon points="2546.5,1002.5 2527.0,992.7 2527.0,1012.3" fill="#000"/>
<path d="M2246.5,1627.5 L2396.5,1627.5 L2396.5,1415.5 L2546.5,1415.5" fill="none" stroke="#000" stroke-width="1.2"/>
<polygon points="2546.5,1415.5 2527.0,1405.7 2527.0,1425.3" fill="#000"/>
<path d="M2621.5,1027.5 L3046.5,1027.5" fill="none" stroke="#000" stroke-width="1.2"/>
<polygon points="3046.5,1027.5 3027.0,1017.7 3027.0,1037.3" fill="#000"/>
<path d="M2643.5,1027.5 L2643.5,1190.5 L2833.5,1190.5" fill="none" stroke="#000" stroke-width="1.2"/>
<polygon points="2833.5,1190.5 2814.0,1180.7 2814.0,1200.3" fill="#000"/>
<path d="M2988.5,1027.5 L2988.5,890.5 L3408.5,890.5" fill="none" stroke="#000" stroke-width="1.2"/>
<polygon points="3408.5,890.5 3389.0,880.7 3389.0,900.3" fill="#000"/>
<path d="M2621.5,1402.5 L3046.5,1402.5" fill="none" stroke="#000" stroke-width="1.2"/>
<polygon points="3046.5,1402.5 3027.0,1392.7 3027.0,1412.3" fill="#000"/>
<path d="M2646.5,1402.5 L2646.5,1227.5 L2833.5,1227.5" fill="none" stroke="#000" stroke-width="1.2"/>
<polygon points="2833.5,1227.5 2814.0,1217.7 2814.0,1237.3" fill="#000"/>
<path d="M2908.5,1215.5 L3046.5,1215.5" fill="none" stroke="#000" stroke-width="1.2"/>
<polygon points="3046.5,1215.5 3027.0,1205.7 3027.0,1225.3" fill="#000"/>
<path d="M2988.5,1215.5 L2988.5,1115.5 L3408.5,1115.5" fill="none" stroke="#000" stroke-width="1.2"/>
<polygon points="3408.5,1115.5 3389.0,1105.7 3389.0,1125.3" fill="#000"/>
<path d="M2993.5,1402.5 L2993.5,1565.5 L3408.5,1565.5" fill="none" stroke="#000" stroke-width="1.2"/>
<polygon points="3408.5,1565.5 3389.0,1555.7 3389.0,1575.3" fill="#000"/>
<path d="M3226.5,1565.5 L3226.5,1340.5 L3408.5,1340.5" fill="none" stroke="#000" stroke-width="1.2"/>
<polygon points="3408.5,1340.5 3389.0,1330.7 3389.0,1350.3" fill="#000"/>
<path d="M3313.5,1077.5 L3408.5,1077.5" fill="none" stroke="#000" stroke-width="1.2"/>
<polygon points="3408.5,1077.5 3389.0,1067.7 3389.0,1087.3" fill="#000"/>
<path d="M3228.5,890.5 L3228.5,1302.5 L3408.5,1302.5" fill="none" stroke="#000" stroke-width="1.2"/>
<polygon points="3408.5,1302.5 3389.0,1292.7 3389.0,1312.3" fill="#000"/>
<path d="M3313.5,852.5 L3313.5,1527.5 L3408.5,1527.5" fill="none" stroke="#000" stroke-width="1.2"/>
<polygon points="3408.5,1527.5 3389.0,1517.7 3389.0,1537.3" fill="#000"/>
<rect x="3311.5" y="875.0" width="4" height="31" fill="#fff"/>
<polygon points="3312.9,875.0 3314.1,875.0 3313.5,889.0" fill="#000"/>
<polygon points="3312.9,906.0 3314.1,906.0 3313.5,892.0" fill="#000"/>
<line x1="3311.3" y1="890.5" x2="3315.7" y2="890.5" stroke="#000" stroke-width="1.2"/>
<rect x="3311.5" y="1100.0" width="4" height="31" fill="#fff"/>
<polygon points="3312.9,1100.0 3314.1,1100.0 3313.5,1114.0" fill="#000"/>
<polygon points="3312.9,1131.0 3314.1,1131.0 3313.5,1117.0" fill="#000"/>
<line x1="3311.3" y1="1115.5" x2="3315.7" y2="1115.5" stroke="#000" stroke-width="1.2"/>
<rect x="3311.5" y="1287.0" width="4" height="31" fill="#fff"/>
<polygon points="3312.9,1287.0 3314.1,1287.0 3313.5,1301.0" fill="#000"/>
<polygon points="3312.9,1318.0 3314.1,1318.0 3313.5,1304.0" fill="#000"/>
<line x1="3311.3" y1="1302.5" x2="3315.7" y2="1302.5" stroke="#000" stroke-width="1.2"/>
<rect x="3311.5" y="1325.0" width="4" height="31" fill="#fff"/>
<polygon points="3312.9,1325.0 3314.1,1325.0 3313.5,1339.0" fill="#000"/>
<polygon points="3312.9,1356.0 3314.1,1356.0 3313.5,1342.0" fill="#000"/>
<line x1="3311.3" y1="1340.5" x2="3315.7" y2="1340.5" stroke="#000" stroke-width="1.2"/>
<rect x="3226.5" y="1100.0" width="4" height="31" fill="#fff"/>
<polygon points="3227.9,1100.0 3229.1,1100.0 3228.5,1114.0" fill="#000"/>
<polygon points="3227.9,1131.0 3229.1,1131.0 3228.5,1117.0" fill="#000"/>
<line x1="3226.3" y1="1115.5" x2="3230.7" y2="1115.5" stroke="#000" stroke-width="1.2"/>
<circle cx="1593.5" cy="765.5" r="6.6" fill="#000"/>
<circle cx="1593.5" cy="1190.5" r="6.6" fill="#000"/>
<circle cx="2466.5" cy="1215.5" r="6.6" fill="#000"/>
<circle cx="2643.5" cy="1027.5" r="6.6" fill="#000"/>
<circle cx="2988.5" cy="1027.5" r="6.6" fill="#000"/>
<circle cx="3228.5" cy="890.5" r="6.6" fill="#000"/>
<circle cx="3313.5" cy="852.5" r="6.6" fill="#000"/>
<circle cx="3313.5" cy="1077.5" r="6.6" fill="#000"/>
<circle cx="2646.5" cy="1402.5" r="6.6" fill="#000"/>
<circle cx="2993.5" cy="1402.5" r="6.6" fill="#000"/>
<circle cx="2988.5" cy="1215.5" r="6.6" fill="#000"/>
<circle cx="3226.5" cy="1565.5" r="6.6" fill="#000"/>
<rect x="1323.0" y="1154.0" width="77.0" height="77.0" fill="#000" opacity="0.33" filter="url(#sh)"/>
<rect x="1321.0" y="1152.0" width="75.0" height="75.0" fill="#fff" stroke="#000" stroke-width="2"/>
<path d="M1333.5,1164 V1216 M1333.5,1190.5 H1385" fill="none" stroke="#b4b4b4" stroke-width="1.8"/>
<path d="M1333.5,1190.5 C1338.5,1158 1349.5,1152 1359,1190.5 S1379.5,1226 1385,1190" fill="none" stroke="#000" stroke-width="2.4"/>
<text x="1358.7" y="1259.5" font-size="25" text-anchor="middle" fill="#000">Angle Of Attack (Sine Wave Generated)</text>
<rect x="2085.0" y="687.0" width="165.0" height="162.0" fill="#000" opacity="0.33" filter="url(#sh)"/>
<rect x="2083.0" y="685.0" width="163.0" height="160.0" fill="#fff" stroke="#000" stroke-width="2"/>
<text x="2177" y="713" font-size="25" text-anchor="middle" fill="#000">1-D T(u)</text>
<path d="M2107.5,725 V836 H2239" fill="none" stroke="#b4b4b4" stroke-width="1.8"/>
<path d="M2107.5,836 L2120,816 L2133,798.5 L2146,777.5 L2159,760 L2173,741 L2198,726 L2210,726 L2239,742" fill="none" stroke="#000" stroke-width="2.4" stroke-linejoin="round"/>
<text x="2161" y="877.5" font-size="25" text-anchor="middle" fill="#000">α versus CL lookup Table</text>
<rect x="2085.0" y="1549.0" width="165.0" height="162.0" fill="#000" opacity="0.33" filter="url(#sh)"/>
<rect x="2083.0" y="1547.0" width="163.0" height="160.0" fill="#fff" stroke="#000" stroke-width="2"/>
<text x="2177" y="1575" font-size="25" text-anchor="middle" fill="#000">1-D T(u)</text>
<path d="M2107.5,1586.5 V1698.5 H2239" fill="none" stroke="#b4b4b4" stroke-width="1.8"/>
<path d="M2107.5,1697.5 L2120,1698 L2133,1695.5 L2146,1695.5 L2159,1693 L2172.5,1688 L2185,1688 L2198,1685 L2210.5,1665.5 L2225,1627.5 L2238.5,1587.5" fill="none" stroke="#000" stroke-width="2.4" stroke-linejoin="round"/>
<text x="2161" y="1740" font-size="25" text-anchor="middle" fill="#000">α versus CD lookup Table</text>
<rect x="1873.0" y="904.0" width="77.0" height="77.0" fill="#000" opacity="0.33" filter="url(#sh)"/>
<rect x="1871.0" y="902.0" width="75.0" height="75.0" fill="#fff" stroke="#000" stroke-width="2"/>
<text x="1906.8" y="946.3" font-size="25" text-anchor="middle" fill="#000">0.5</text>
<text x="1908.5" y="1010" font-size="25" text-anchor="middle" fill="#000">Half</text>
<rect x="1723.0" y="1029.0" width="77.0" height="77.0" fill="#000" opacity="0.33" filter="url(#sh)"/>
<rect x="1721.0" y="1027.0" width="75.0" height="75.0" fill="#fff" stroke="#000" stroke-width="2"/>
<text x="1757" y="1070.5" font-size="25" text-anchor="middle" fill="#000">V</text>
<text x="1758.5" y="1135" font-size="25" text-anchor="middle" fill="#000">Velocity</text>
<rect x="1873.0" y="1029.0" width="77.0" height="77.0" fill="#000" opacity="0.33" filter="url(#sh)"/>
<rect x="1871.0" y="1027.0" width="75.0" height="75.0" fill="#fff" stroke="#000" stroke-width="2"/>
<text x="1893.5" y="1079" font-family='"Liberation Serif", serif' font-size="36" font-style="italic" font-weight="bold">u<tspan font-size="26" font-style="normal" font-weight="normal" dx="-1.6" dy="-14.8">2</tspan></text>
<text x="1908.5" y="1135" font-size="25" text-anchor="middle" fill="#000">Velocity^2</text>
<rect x="1873.0" y="1154.0" width="77.0" height="77.0" fill="#000" opacity="0.33" filter="url(#sh)"/>
<rect x="1871.0" y="1152.0" width="75.0" height="75.0" fill="#fff" stroke="#000" stroke-width="2"/>
<text x="1907" y="1196" font-size="25" text-anchor="middle" fill="#000">rho</text>
<text x="1908.5" y="1259.5" font-size="25" text-anchor="middle" fill="#000">Density(Sea level)</text>
<rect x="2085.0" y="1292.0" width="77.0" height="77.0" fill="#000" opacity="0.33" filter="url(#sh)"/>
<rect x="2083.0" y="1290.0" width="75.0" height="75.0" fill="#fff" stroke="#000" stroke-width="2"/>
<text x="2120.5" y="1334" font-size="25" text-anchor="middle" fill="#000">A</text>
<text x="2120.5" y="1397" font-size="25" text-anchor="middle" fill="#000">Wing Area</text>
<rect x="2085.0" y="1027.0" width="77.0" height="82.0" fill="#000" opacity="0.33" filter="url(#sh)"/>
<rect x="2083.0" y="1025.0" width="75.0" height="80.0" fill="#fff" stroke="#000" stroke-width="2"/>
<text x="2121" y="1073" font-size="25" text-anchor="middle" fill="#000">x</text>
<text x="2121" y="1137" font-size="25" text-anchor="middle" fill="#000">Dynamic Pressure</text>
<rect x="2310.0" y="1172.0" width="77.0" height="79.0" fill="#000" opacity="0.33" filter="url(#sh)"/>
<rect x="2308.0" y="1170.0" width="75.0" height="77.0" fill="#fff" stroke="#000" stroke-width="2"/>
<text x="2346" y="1215" font-size="25" text-anchor="middle" fill="#000">x</text>
<text x="2346" y="1280" font-size="25" text-anchor="middle" fill="#000">Dynamic x Area</text>
<rect x="2548.0" y="982.0" width="77.0" height="84.0" fill="#000" opacity="0.33" filter="url(#sh)"/>
<rect x="2546.0" y="980.0" width="75.0" height="82.0" fill="#fff" stroke="#000" stroke-width="2"/>
<text x="2583.5" y="1029" font-size="25" text-anchor="middle" fill="#000">x</text>
<text x="2583.5" y="1094.5" font-size="25" text-anchor="middle" fill="#000">LIFT</text>
<rect x="2548.0" y="1359.0" width="77.0" height="80.0" fill="#000" opacity="0.33" filter="url(#sh)"/>
<rect x="2546.0" y="1357.0" width="75.0" height="78.0" fill="#fff" stroke="#000" stroke-width="2"/>
<text x="2583.5" y="1402.5" font-size="25" text-anchor="middle" fill="#000">x</text>
<text x="2583.5" y="1466.5" font-size="25" text-anchor="middle" fill="#000">DRAG</text>
<rect x="2835.0" y="1172.0" width="77.0" height="79.0" fill="#000" opacity="0.33" filter="url(#sh)"/>
<rect x="2833.0" y="1170.0" width="75.0" height="77.0" fill="#fff" stroke="#000" stroke-width="2"/>
<text x="2851.5" y="1198.5" font-size="25" text-anchor="middle" fill="#000">x</text>
<text x="2851.5" y="1235" font-size="25" text-anchor="middle" fill="#000">÷</text>
<text x="2871" y="1280" font-size="25" text-anchor="middle" fill="#000">LIFT/DRAG</text>
<rect x="3048.0" y="989.0" width="77.0" height="82.0" fill="#000" opacity="0.33" filter="url(#sh)"/>
<rect x="3046.0" y="987.0" width="75.0" height="80.0" fill="#fff" stroke="#000" stroke-width="2"/>
<rect x="3057.0" y="997.9" width="55.5" height="35.5" fill="none" stroke="#000" stroke-width="3" rx="6.5"/>
<text x="3083.5" y="1099.5" font-size="25" text-anchor="middle" fill="#000">LIFT Scope</text>
<rect x="3048.0" y="1177.0" width="77.0" height="82.0" fill="#000" opacity="0.33" filter="url(#sh)"/>
<rect x="3046.0" y="1175.0" width="75.0" height="80.0" fill="#fff" stroke="#000" stroke-width="2"/>
<rect x="3057.0" y="1185.9" width="55.5" height="35.5" fill="none" stroke="#000" stroke-width="3" rx="6.5"/>
<text x="3083.5" y="1287.3" font-size="25" text-anchor="middle" fill="#000">L/D Scope</text>
<rect x="3048.0" y="1364.0" width="77.0" height="82.0" fill="#000" opacity="0.33" filter="url(#sh)"/>
<rect x="3046.0" y="1362.0" width="75.0" height="80.0" fill="#fff" stroke="#000" stroke-width="2"/>
<rect x="3057.0" y="1372.9" width="55.5" height="35.5" fill="none" stroke="#000" stroke-width="3" rx="6.5"/>
<text x="3083.5" y="1475" font-size="25" text-anchor="middle" fill="#000">DRAG Scope</text>
<rect x="3410.0" y="834.0" width="90.0" height="80.0" fill="#000" opacity="0.33" filter="url(#sh)"/>
<rect x="3408.0" y="832.0" width="88.0" height="78.0" fill="#fff" stroke="#000" stroke-width="2"/>
<rect x="3415.5" y="837.0" width="72.5" height="69" fill="none" stroke="#8a8a8a" stroke-width="1.2"/>
<ellipse cx="3451.5" cy="871.5" rx="33.5" ry="18" fill="none" stroke="#000" stroke-width="2.5" transform="rotate(-45 3451.5 871.5)"/>
<text x="3452" y="941.5" font-size="25" text-anchor="middle" fill="#000">Lift vs. α</text>
<rect x="3410.0" y="1059.0" width="90.0" height="80.0" fill="#000" opacity="0.33" filter="url(#sh)"/>
<rect x="3408.0" y="1057.0" width="88.0" height="78.0" fill="#fff" stroke="#000" stroke-width="2"/>
<rect x="3415.5" y="1062.0" width="72.5" height="69" fill="none" stroke="#8a8a8a" stroke-width="1.2"/>
<ellipse cx="3451.5" cy="1096.5" rx="33.5" ry="18" fill="none" stroke="#000" stroke-width="2.5" transform="rotate(-45 3451.5 1096.5)"/>
<text x="3452" y="1166.5" font-size="25" text-anchor="middle" fill="#000">Lift/Drag vs. α</text>
<rect x="3410.0" y="1284.0" width="90.0" height="80.0" fill="#000" opacity="0.33" filter="url(#sh)"/>
<rect x="3408.0" y="1282.0" width="88.0" height="78.0" fill="#fff" stroke="#000" stroke-width="2"/>
<rect x="3415.5" y="1287.0" width="72.5" height="69" fill="none" stroke="#8a8a8a" stroke-width="1.2"/>
<ellipse cx="3451.5" cy="1321.5" rx="33.5" ry="18" fill="none" stroke="#000" stroke-width="2.5" transform="rotate(-45 3451.5 1321.5)"/>
<text x="3452" y="1391.5" font-size="25" text-anchor="middle" fill="#000">Lift vs. Drag</text>
<rect x="3410.0" y="1509.0" width="90.0" height="80.0" fill="#000" opacity="0.33" filter="url(#sh)"/>
<rect x="3408.0" y="1507.0" width="88.0" height="78.0" fill="#fff" stroke="#000" stroke-width="2"/>
<rect x="3415.5" y="1512.0" width="72.5" height="69" fill="none" stroke="#8a8a8a" stroke-width="1.2"/>
<ellipse cx="3451.5" cy="1546.5" rx="33.5" ry="18" fill="none" stroke="#000" stroke-width="2.5" transform="rotate(-45 3451.5 1546.5)"/>
<text x="3452" y="1616.5" font-size="25" text-anchor="middle" fill="#000">Drag vs. α</text>
</g>
</svg>
</body></html>
